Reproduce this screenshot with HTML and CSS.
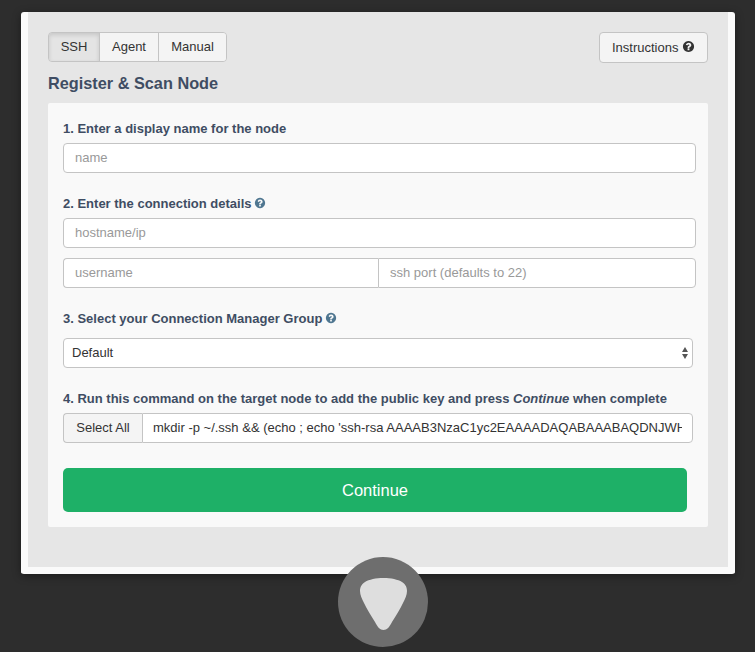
FILE: index.html

```html
<!DOCTYPE html>
<html lang="en">
<head>
  <meta charset="UTF-8" />
  <title>Register &amp; Scan Node</title>
  <link rel="stylesheet" href="styles.css">
</head>
<body>
  <svg class="defs" width="0" height="0">
    <symbol id="question" viewBox="0 0 1792 1792">
      <path fill-rule="evenodd" d="M1024 1376v-192q0-14-9-23t-23-9h-192q-14 0-23 9t-9 23v192q0 14 9 23t23 9h192q14 0 23-9t9-23zm256-672q0-88-55.5-163t-138.5-116-170-41q-243 0-371 213-15 24 8 42l132 100q7 6 19 6 16 0 25-12 53-68 86-92 34-24 86-24 48 0 85.5 26t37.5 59q0 38-20 61t-68 45q-63 28-115.5 86.5t-52.5 125.5v36q0 14 9 23t23 9h192q14 0 23-9t9-23q0-19 21.5-49.5t54.5-49.5q32-18 49-28.5t46-35 44.5-48 28-60.5 12.5-81zm384 192q0 209-103 385.5t-279.5 279.5-385.5 103-385.5-103-279.5-279.5-103-385.5 103-385.5 279.5-279.5 385.5-103 385.5 103 279.5 279.5 103 385.5z"/>
    </symbol>
  </svg>

  <div class="modal">
    <div class="toolbar">
      <div class="tabs">
        <button class="tab active">SSH</button>
        <button class="tab">Agent</button>
        <button class="tab">Manual</button>
      </div>
      <button class="instructions">Instructions <svg class="icon big"><use href="#question"/></svg></button>
    </div>

    <h2 class="title">Register &amp; Scan Node</h2>

    <div class="panel">
      <div class="step">
        <label class="step-label">1. Enter a display name for the node</label>
        <input class="field wide" type="text" placeholder="name">
      </div>

      <div class="step">
        <label class="step-label">2. Enter the connection details <svg class="icon hint"><use href="#question"/></svg></label>
        <input class="field wide" type="text" placeholder="hostname/ip">
        <div class="field-pair wide">
          <input class="field" type="text" placeholder="username">
          <input class="field" type="text" placeholder="ssh port (defaults to 22)">
        </div>
      </div>

      <div class="step">
        <label class="step-label">3. Select your Connection Manager Group <svg class="icon hint"><use href="#question"/></svg></label>
        <div class="select-wrap">
          <select class="field select">
            <option>Default</option>
          </select>
          <span class="select-arrows"></span>
        </div>
      </div>

      <div class="step">
        <label class="step-label">4. Run this command on the target node to add the public key and press <em>Continue</em> when complete</label>
        <div class="command">
          <button class="select-all">Select All</button>
          <input class="field" type="text" readonly value="mkdir -p ~/.ssh &amp;&amp; (echo ; echo 'ssh-rsa AAAAB3NzaC1yc2EAAAADAQABAAABAQDNJWHkq7s2mVxT0pLc9Rf4uYb' &gt;&gt; ~/.ssh/authorized_keys)">
        </div>
      </div>

      <button class="continue">Continue</button>
    </div>
  </div>

  <div class="logo-badge">
    <svg width="47" height="52" viewBox="0 0 47 52">
      <path fill="#dedede" d="M23.5 0C31 0 38 1.500 42 4C46 6.500 47 10 47 13C47 17 45 21 43 25C40 31 36 38 32 44C29.500 49 27 52 23.500 52C20 52 17.500 49 15 44C11 38 7 31 4 25C2 21 0 17 0 13C0 10 1 6.500 5 4C9 1.500 16 0 23.500 0Z"/>
    </svg>
  </div>
</body>
</html>
```

FILE: styles.css

```css
* {
  box-sizing: border-box;
}

body {
  margin: 0;
  height: 652px;
  overflow: hidden;
  position: relative;
  background: #2d2d2d;
  font-family: "Liberation Sans", Arial, sans-serif;
  font-size: 13px;
  color: #333;
}

.defs {
  position: absolute;
}

.icon {
  width: 12px;
  height: 12px;
  fill: currentColor;
  vertical-align: -1px;
}

.modal {
  width: 714px;
  height: 562px;
  margin: 12px 0 0 21px;
  padding: 20px 20px 0;
  background: #e6e6e6;
  border: 7px solid #fafafa;
  border-top: 0;
  border-radius: 3px;
  box-shadow: 0 2px 8px rgba(0, 0, 0, 0.4);
}

.toolbar {
  display: flex;
  justify-content: space-between;
  align-items: flex-start;
}

.tabs {
  display: flex;
  height: 30px;
  border: 1px solid #c4c4c4;
  border-radius: 4px;
  overflow: hidden;
}

button {
  font-family: inherit;
}

.tab {
  padding: 0 0 2px;
  border: 0;
  border-right: 1px solid #c4c4c4;
  background: #f4f4f4;
  color: #333;
  font-size: 13px;
  width: 59px;
}

.tab:last-child {
  border-right: 0;
  width: 67px;
}

.tab.active {
  width: 51px;
  background: #e4e4e4;
  box-shadow: inset 0 2px 4px rgba(0, 0, 0, 0.13);
}

.instructions {
  width: 109px;
  height: 31px;
  padding: 0;
  border: 1px solid #c4c4c4;
  border-radius: 4px;
  background: #f4f4f4;
  color: #333;
  font-size: 13px;
}

.big {
  width: 13px;
  height: 13px;
}

.title {
  margin: 11px 0 11px;
  font-size: 16.3px;
  line-height: 18px;
  font-weight: bold;
  color: #3f4d63;
}

.panel {
  height: 424px;
  padding: 18px 15px 0;
  background: #f9f9f9;
  border-radius: 2px;
}

.step {
  margin-bottom: 23px;
}

.step-label {
  display: block;
  margin-bottom: 7px;
  font-size: 13px;
  line-height: 15px;
  font-weight: bold;
  color: #3f4d63;
}

.step-label em {
  font-style: italic;
}

.hint {
  color: #4f7690;
  margin-left: -1px;
}

.field {
  display: block;
  width: 100%;
  height: 30px;
  padding: 0 11px 2px;
  border: 1px solid #c4c4c4;
  border-radius: 4px;
  background: #fff;
  color: #333;
  font-family: inherit;
  font-size: 13px;
  outline: none;
}

.field.wide,
.field-pair.wide {
  width: 633px;
}

.field::placeholder {
  color: #999;
}

.field-pair {
  display: flex;
  margin-top: 10px;
}

.field-pair .field {
  flex: 1;
}

.field-pair .field:first-child {
  border-radius: 4px 0 0 4px;
  border-right: 0;
  flex: 0 0 315px;
}

.field-pair .field:last-child {
  border-radius: 0 4px 4px 0;
}

.select-wrap {
  position: relative;
  width: 630px;
  margin-top: 12px;
}

.select {
  appearance: none;
  padding: 0 8px 2px;
}

/* up and down triangles on the right of the select */
.select-arrows::before,
.select-arrows::after {
  content: "";
  position: absolute;
  right: 5px;
  border-left: 3px solid transparent;
  border-right: 3px solid transparent;
}

.select-arrows::before {
  top: 9px;
  border-bottom: 5px solid #555;
}

.select-arrows::after {
  top: 16px;
  border-top: 5px solid #555;
}

.command {
  display: flex;
  width: 630px;
}

.select-all {
  flex: 0 0 79px;
  height: 30px;
  padding: 0 0 2px;
  border: 1px solid #c4c4c4;
  border-right: 0;
  border-radius: 4px 0 0 4px;
  background: #f4f4f4;
  color: #333;
  font-size: 13px;
}

.command .field {
  flex: 1;
  min-width: 0;
  padding: 0 10px 2px;
  border-radius: 0 4px 4px 0;
}

.continue {
  display: block;
  width: 624px;
  height: 44px;
  margin-top: 25px;
  padding: 0;
  border: 0;
  border-radius: 5px;
  background: #1eb067;
  color: #fff;
  font-size: 16.5px;
}

.logo-badge {
  position: absolute;
  left: 338px;
  top: 557px;
  width: 90px;
  height: 90px;
  padding-top: 4px;
  border-radius: 50%;
  background: #6e6e6e;
  display: flex;
  align-items: center;
  justify-content: center;
}
```
